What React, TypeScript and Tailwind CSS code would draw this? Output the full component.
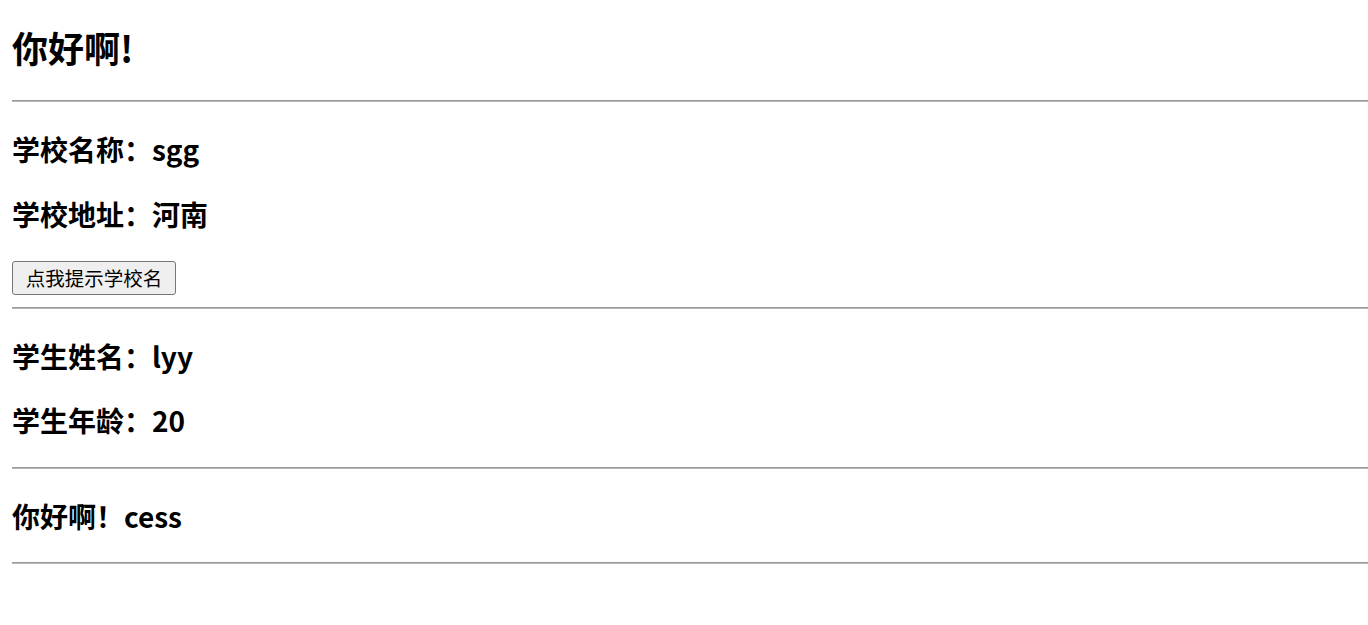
import React from "react";

function Hr({ className = "" }: { className?: string }) {
  return <div className={"h-[2px] border-t border-t-[#9a9a9a] border-b border-b-[#b8b8b8] " + className} />;
}

export default function App() {
  return (
    <div className="bg-white min-h-[625px] pl-[12px] text-black font-['Noto_Sans_CJK_SC',sans-serif]">
      <h1 className="mt-[27px] text-[36px] leading-[40px] font-bold">你好啊!</h1>
      <Hr className="mt-[33px]" />
      <h2 className="mt-[30px] text-[28px] leading-[34px] font-bold">学校名称：sgg</h2>
      <h2 className="mt-[31px] text-[28px] leading-[34px] font-bold">学校地址：河南</h2>
      <button className="mt-[30px] h-[34px] w-[164px] block border border-[#767676] bg-[#efefef] rounded-[3px] text-[19.5px] leading-[32px] text-black">
        点我提示学校名
      </button>
      <Hr className="mt-[12px]" />
      <h2 className="mt-[30px] text-[28px] leading-[34px] font-bold">学生姓名：lyy</h2>
      <h2 className="mt-[30px] text-[28px] leading-[34px] font-bold">学生年龄：20</h2>
      <Hr className="mt-[30px]" />
      <h3 className="mt-[30px] text-[28px] leading-[34px] font-bold">你好啊！cess</h3>
      <Hr className="mt-[29px]" />
    </div>
  );
}
